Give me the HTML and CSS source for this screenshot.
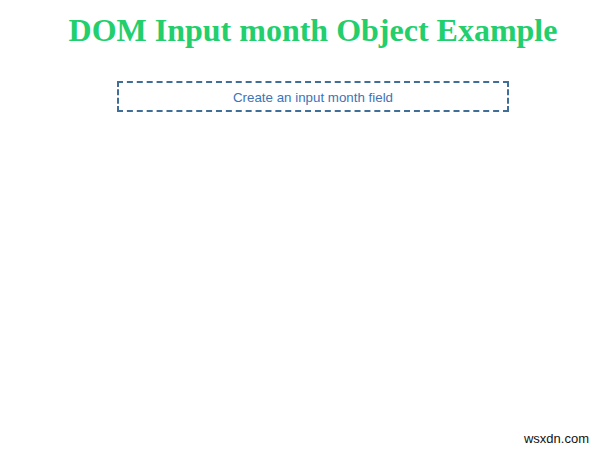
FILE: index.html
```html
<!DOCTYPE html>
<html>
<head>
<meta charset="utf-8">
<link rel="stylesheet" href="styles.css">
</head>
<body>
<div class="page">
  <h1 class="title">DOM Input month Object Example</h1>
  <div class="box">Create an input month field</div>
</div>
<div class="watermark">wsxdn.com</div>
</body>
</html>
```
FILE: styles.css
```css
html, body {
  margin: 0;
  padding: 0;
  background: #ffffff;
  width: 600px;
  height: 454px;
  overflow: hidden;
}
body {
  position: relative;
  font-family: "Liberation Sans", Arial, sans-serif;
}
.page {
  padding: 0 8px 0 34px;
  display: flex;
  flex-direction: column;
  align-items: center;
}
.title {
  margin: 12px 0 0 0;
  font-family: "Liberation Serif", "Times New Roman", serif;
  font-weight: bold;
  font-size: 32px;
  line-height: 37px;
  color: #22cf6c;
}
.box {
  box-sizing: border-box;
  margin-top: 32px;
  width: 392px;
  height: 31px;
  padding-top: 2px;
  border: 2px dashed #3f6f98;
  display: flex;
  align-items: center;
  justify-content: center;
  font-size: 13.33px;
  color: #3d74b6;
}
.watermark {
  position: absolute;
  right: 11px;
  bottom: 8px;
  font-size: 13px;
  color: #111;
}
```
